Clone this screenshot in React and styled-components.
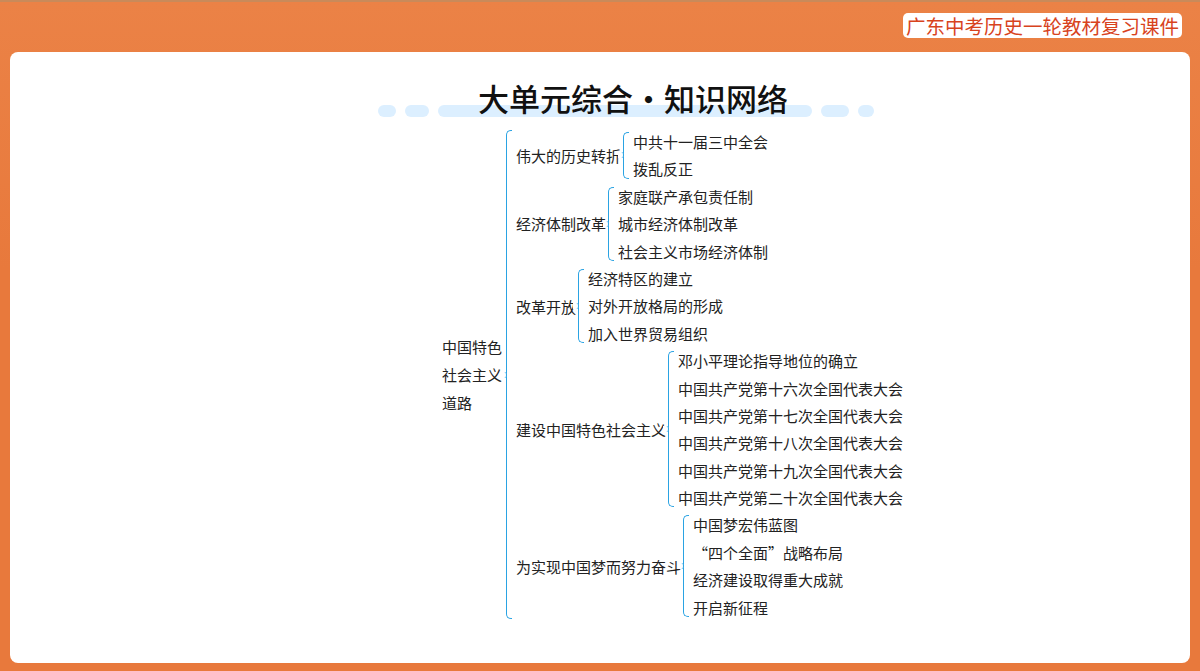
import React from 'react';
import styled, { createGlobalStyle } from 'styled-components';

const Global = createGlobalStyle`
  html, body { margin: 0; padding: 0; }
  body { width: 1200px; height: 671px; overflow: hidden; background: #e8793c; }
`;

const Page = styled.div`
  width: 1200px;
  height: 671px;
  box-sizing: border-box;
  border-top: 2px solid #c98a5a;
  background: linear-gradient(180deg, #eb8246 0%, #e8793c 40%);
  padding: 0 10px 8px 10px;
  display: flex;
  flex-direction: column;
`;

const TopBar = styled.div`
  height: 50px;
  display: flex;
  justify-content: flex-end;
  align-items: flex-start;
  padding-top: 11px;
  box-sizing: border-box;
`;

const Badge = styled.div`
  background: #fff;
  border-radius: 5px;
  padding: 0 3px;
  color: #d8431d;
  font-family: 'Noto Sans CJK SC', sans-serif;
  font-size: 19.5px;
  line-height: 25px;
  margin-right: 8px;
`;

const Card = styled.div`
  flex: 1;
  background: #fff;
  border-radius: 8px;
  display: flex;
  flex-direction: column;
  align-items: flex-start;
  padding-top: 24px;
`;

const TitleWrap = styled.div`
  position: relative;
  width: 527px;
  height: 50px;
  margin-left: 368px;
  padding-left: 100px;
  box-sizing: border-box;
  display: flex;
`;

const Dots = styled.div`
  position: absolute;
  left: 0;
  top: 29px;
  display: flex;
  gap: 9px;
`;

const Dot = styled.span`
  display: block;
  width: ${p => p.w}px;
  height: 12px;
  border-radius: 6px;
  background: #dcefff;
`;

const Title = styled.h1`
  position: relative;
  margin: 0;
  font-family: 'Noto Sans CJK SC', sans-serif;
  font-size: 31px;
  font-weight: 500;
  color: #111;
  line-height: 44px;
  white-space: nowrap;
`;

const Tree = styled.div`
  display: flex;
  align-items: center;
  margin-top: 2px;
  margin-left: 432px;
  font-family: 'Noto Sans CJK SC', sans-serif;
  font-size: 15px;
  color: #222;
`;

const RootLabel = styled.div`
  line-height: 28px;
  width: 62px;
`;

const Brace = styled.div`
  align-self: stretch;
  width: 5px;
  margin: ${p => p.inset}px 4px ${p => p.inset}px 2px;
  border: 1.5px solid #2aa3e3;
  border-right: none;
  border-radius: 5px 0 0 5px;
  position: relative;
  &::after {
    content: '';
    position: absolute;
    left: -6px;
    top: 50%;
    width: 5px;
    height: 6px;
    margin-top: -3px;
    border-right: 1.5px solid #2aa3e3;
    border-radius: 0 5px 5px 0;
    background: #fff;
  }
`;

const Column = styled.div`
  display: flex;
  flex-direction: column;
`;

const Branch = styled.div`
  display: flex;
  align-items: center;
`;

const Leaf = styled.div`
  height: 27.4px;
  line-height: 27.4px;
  white-space: nowrap;
`;

const data = [
  ['伟大的历史转折', ['中共十一届三中全会', '拨乱反正']],
  ['经济体制改革', ['家庭联产承包责任制', '城市经济体制改革', '社会主义市场经济体制']],
  ['改革开放', ['经济特区的建立', '对外开放格局的形成', '加入世界贸易组织']],
  ['建设中国特色社会主义', [
    '邓小平理论指导地位的确立',
    '中国共产党第十六次全国代表大会',
    '中国共产党第十七次全国代表大会',
    '中国共产党第十八次全国代表大会',
    '中国共产党第十九次全国代表大会',
    '中国共产党第二十次全国代表大会',
  ]],
  ['为实现中国梦而努力奋斗', ['中国梦宏伟蓝图', '“四个全面”战略布局', '经济建设取得重大成就', '开启新征程']],
];

const App = () => (
  <>
    <Global />
    <Page>
      <TopBar>
        <Badge>广东中考历史一轮教材复习课件</Badge>
      </TopBar>
      <Card>
        <TitleWrap>
          <Dots>
            <Dot w={18} /><Dot w={24} /><Dot w={374} /><Dot w={28} /><Dot w={16} />
          </Dots>
          <Title>大单元综合·知识网络</Title>
        </TitleWrap>
        <Tree>
          <RootLabel>中国特色<br />社会主义<br />道路</RootLabel>
          <Brace inset={2} />
          <Column>
            {data.map(([label, leaves]) => (
              <Branch key={label}>
                <span>{label}</span>
                <Brace inset={4} />
                <Column>
                  {leaves.map(l => <Leaf key={l}>{l}</Leaf>)}
                </Column>
              </Branch>
            ))}
          </Column>
        </Tree>
      </Card>
    </Page>
  </>
);

export default App;
